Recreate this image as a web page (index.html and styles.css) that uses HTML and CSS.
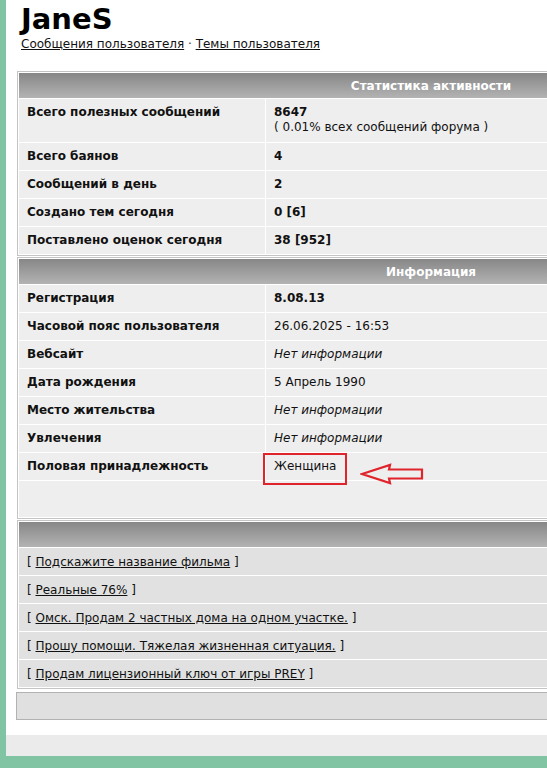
FILE: index.html
```html
<!DOCTYPE html>
<html lang="ru">
<head>
<meta charset="utf-8">
<title>JaneS — профиль</title>
<link rel="stylesheet" href="styles.css">
</head>
<body>
<div class="page">
  <div class="content">
    <h1 class="username">JaneS</h1>
    <div class="userlinks"><a href="#">Сообщения пользователя</a> · <a href="#">Темы пользователя</a></div>

    <table class="ptable stats">
      <tr><th colspan="2">Статистика активности</th></tr>
      <tr class="first"><td class="lbl">Всего полезных сообщений</td><td><b>8647</b><br>( 0.01% всех сообщений форума )</td></tr>
      <tr><td class="lbl">Всего баянов</td><td><b>4</b></td></tr>
      <tr><td class="lbl">Сообщений в день</td><td><b>2</b></td></tr>
      <tr><td class="lbl">Создано тем сегодня</td><td><b>0 [6]</b></td></tr>
      <tr><td class="lbl">Поставлено оценок сегодня</td><td><b>38 [952]</b></td></tr>
    </table>

    <table class="ptable info">
      <tr><th colspan="2">Информация</th></tr>
      <tr><td class="lbl">Регистрация</td><td><b>8.08.13</b></td></tr>
      <tr><td class="lbl">Часовой пояс пользователя</td><td>26.06.2025 - 16:53</td></tr>
      <tr><td class="lbl">Вебсайт</td><td><i>Нет информации</i></td></tr>
      <tr><td class="lbl">Дата рождения</td><td>5 Апрель 1990</td></tr>
      <tr><td class="lbl">Место жительства</td><td><i>Нет информации</i></td></tr>
      <tr><td class="lbl">Увлечения</td><td><i>Нет информации</i></td></tr>
      <tr>
        <td class="lbl">Половая принадлежность</td>
        <td class="marked">Женщина
          <span class="redbox"></span>
          <svg class="redarrow" width="64" height="24" viewBox="0 0 64 24">
            <path d="M2 12 L30 3 L29 7.5 L62 7.5 L62 16.5 L29 16.5 L30 21 Z" fill="none" stroke="#e0242c" stroke-width="2.2" stroke-linejoin="miter"/>
          </svg>
        </td>
      </tr>
      <tr class="spacer"><td colspan="2"></td></tr>
    </table>

    <table class="ptable topics">
      <tr><th colspan="2"></th></tr>
      <tr><td colspan="2">[ <a href="#">Подскажите название фильма</a> ]</td></tr>
      <tr><td colspan="2">[ <a href="#">Реальные 76%</a> ]</td></tr>
      <tr><td colspan="2">[ <a href="#">Омск. Продам 2 частных дома на одном участке.</a> ]</td></tr>
      <tr><td colspan="2">[ <a href="#">Прошу помощи. Тяжелая жизненная ситуация.</a> ]</td></tr>
      <tr><td colspan="2">[ <a href="#">Продам лицензионный ключ от игры PREY</a> ]</td></tr>
    </table>

    <div class="bottombox"></div>
  </div>
  <div class="footbar"></div>
</div>
</body>
</html>
```
FILE: styles.css
```css
html, body {
  margin: 0;
  padding: 0;
}
body {
  background: #80c4a4;
  font-family: "DejaVu Sans", Verdana, sans-serif;
  font-size: 12px;
  color: #111;
  height: 768px;
  overflow: hidden;
}
.page {
  margin-left: 6px;
  width: 880px;
  background: #fff;
}
.content {
  padding: 0 0 15px 11px;
}
.username {
  margin: 0;
  padding: 3px 0 0 4px;
  font-size: 29px;
  line-height: 32px;
  font-weight: bold;
  color: #000;
}
.userlinks {
  padding-left: 4px;
  margin-top: 2px;
  line-height: 14px;
  color: #333;
}
a {
  color: #111;
  text-decoration: underline;
}
.ptable {
  width: 828px;
  border: 1px solid #c4c4c4;
  border-spacing: 1px;
  background: #fff;
}
.stats {
  margin-top: 20px;
}
.info {
  margin-top: 1px;
}
.topics {
  margin-top: 1px;
}
.ptable th {
  height: 25px;
  padding: 0;
  background: linear-gradient(#878787, #b3b3b3);
  color: #fff;
  font-weight: bold;
  text-align: center;
}
.ptable td {
  background: #eeeeee;
  padding: 6px 8px 6px 8px;
  line-height: 15px;
  vertical-align: top;
  text-align: left;
}
.ptable tr.first td {
  padding-top: 6px;
  padding-bottom: 7px;
}
.ptable td.lbl {
  width: 230px;
  font-weight: bold;
}
.ptable tr.spacer td {
  height: 24px;
}
.marked {
  position: relative;
}
.redbox {
  position: absolute;
  left: -3px;
  top: 0;
  width: 80px;
  height: 28px;
  border: 2px solid #e0242c;
}
.redarrow {
  position: absolute;
  left: 94px;
  top: 9px;
}
.topics td {
  background: #e1e1e1;
  padding: 7px 8px 5px 8px;
}
.bottombox {
  margin-top: 3px;
  margin-left: -1px;
  height: 26px;
  width: 840px;
  background: #e0e0e0;
  border: 1px solid #b2b2b2;
}
.footbar {
  height: 21px;
  background: #ebebeb;
}
```
